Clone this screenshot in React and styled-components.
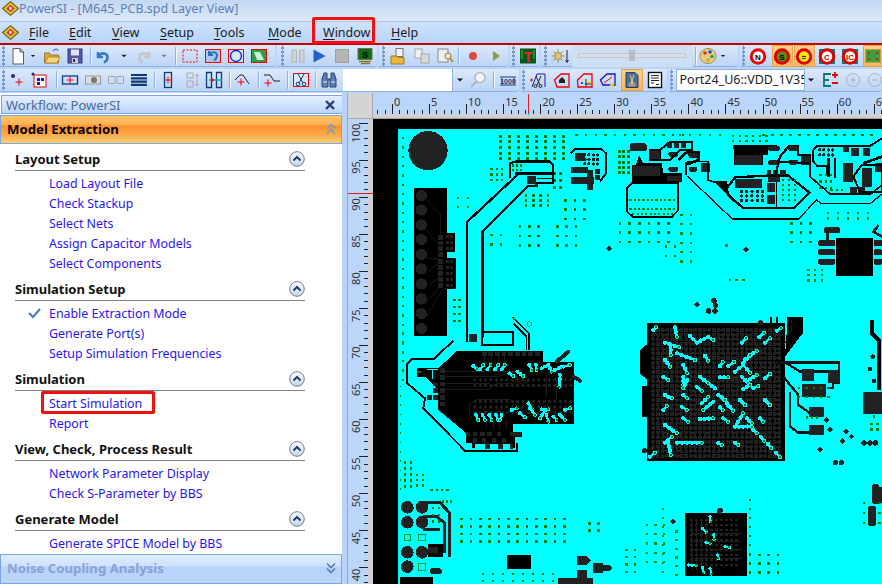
import React from 'react'
import styled, { createGlobalStyle } from 'styled-components'

const GlobalStyle = createGlobalStyle`
  html, body { margin: 0; padding: 0; background: #bcd5f7; }
  body { font-family: "Noto Sans", "Liberation Sans", sans-serif; overflow: hidden; }
`

const UI_FONT = `"Noto Sans", "Liberation Sans", sans-serif`
const CYAN = '#00ffff'
const DARK = '#222222'
const GREEN = '#008000'

const Shell = styled.div`
  width: 882px;
  height: 584px;
  overflow: hidden;
  display: flex;
  flex-direction: column;
`

const TitleBar = styled.div`
  height: 21px;
  flex: none;
  display: flex;
  align-items: center;
  gap: 0;
  padding: 0 0 4px 2px;
  box-sizing: border-box;
  margin-bottom: 1px;
  background: linear-gradient(#c3d8f2, #dce9f9);
  box-shadow: 0 1px 0 #a9c7ee;
  color: #5d7fb3;
  font-size: 12.5px;
`

const MenuBar = styled.div`
  height: 21px;
  flex: none;
  display: flex;
  align-items: center;
  background: linear-gradient(#cfe2fb, #b6d4fb);
  border-bottom: 2px solid #c60000;
`

const MenuLogo = styled.div`
  width: 29px;
  flex: none;
  display: flex;
  padding-left: 2px;
  box-sizing: border-box;
`

const MenuItem = styled.div`
  position: relative;
  width: ${p => p.$w}px;
  flex: none;
  color: #1a1a1a;
  font-size: 12.5px;
  u { text-underline-offset: 2px; text-decoration-thickness: 1px; }
  ${p => p.$marked && `
    &::after {
      content: '';
      position: absolute;
      left: -11px;
      right: 16px;
      top: -7px;
      bottom: -3px;
      border: 3px solid #f01010;
      border-radius: 2px;
    }
  `}
`

const ToolRow = styled.div`
  height: ${p => p.$h}px;
  flex: none;
  display: flex;
  gap: 2px;
  margin-bottom: ${p => p.$mb}px;
  background: #bcd5f7;
`

const ToolGroup = styled.div`
  width: ${p => p.$w}px;
  flex: none;
  display: flex;
  align-items: center;
  background: linear-gradient(#dbe9fc, #c8dcf8 60%, #bcd5f6);
  border-bottom: 1px solid #8fb2e4;
  border-radius: 0 0 3px 0;
`

const Tool = styled.div`
  width: ${p => p.$w}px;
  height: 22px;
  flex: none;
  margin-left: ${p => p.$ml}px;
  display: flex;
  align-items: center;
  justify-content: center;
  box-sizing: border-box;
  ${p => p.$on && `
    background: linear-gradient(#ffd08a, #fdb45a);
    border: 1px solid #e9a24e;
  `}
`

const Grip = styled(Tool)`
  background-image: radial-gradient(#6f97d6 1.1px, transparent 1.2px);
  background-size: 3px 4px;
  background-position: center;
  background-repeat: repeat-y;
`

const Sep = styled(Tool)`
  position: relative;
  &::after {
    content: '';
    width: 1px;
    height: 18px;
    background: #8fb2e4;
    box-shadow: 1px 0 0 #f2f7ff;
  }
`

const SliderTrack = styled(Tool)`
  background: #cfdff3;
  padding: 0 6px;
  &::before {
    content: '';
    flex: 1;
    height: 3px;
    background: #dadfe6;
    border: 1px solid #bfc7d2;
  }
  &::after {
    content: '';
    position: absolute;
    width: 6px;
    height: 11px;
    background: #b9bec6;
  }
`

const SearchBox = styled.div`
  width: ${p => p.$w}px;
  height: 22px;
  flex: none;
  margin-left: ${p => p.$ml}px;
  background: #fff;
  border-right: 1px solid #8fb2e4;
  box-sizing: border-box;
`

const ComboBox = styled.div`
  width: ${p => p.$w}px;
  height: 22px;
  flex: none;
  margin-left: ${p => p.$ml}px;
  box-sizing: border-box;
  padding-left: 3px;
  background: #fff;
  border: 1px solid #8fb2e4;
  color: #222;
  font-size: 12.5px;
  line-height: 20px;
  white-space: nowrap;
  overflow: hidden;
`

const Body = styled.div`
  flex: 1;
  display: flex;
  min-height: 0;
`

const Sidebar = styled.div`
  width: 342px;
  flex: none;
  display: flex;
  flex-direction: column;
  background: #fff;
`

const PanelTitle = styled.div`
  height: 19px;
  flex: none;
  box-sizing: border-box;
  margin: 2px 0 1px 1px;
  padding: 0 6px 0 4px;
  display: flex;
  align-items: center;
  justify-content: space-between;
  background: linear-gradient(#e4efff, #bcd5fb);
  border: 1px solid #7ba6e0;
  border-width: 1px 0 1px 1px;
  color: #4a6a9c;
  font-size: 13px;
`

const Accordion = styled.div`
  flex: none;
  display: flex;
  align-items: center;
  justify-content: space-between;
  box-sizing: border-box;
  padding: 0 3px 2px 6px;
  font-size: 13.2px;
  font-weight: 700;
  border: 1px solid #7ba6e0;
  height: ${p => p.$h}px;
`

const ActiveAccordion = styled(Accordion)`
  background: linear-gradient(#ffc56e, #ffb252 30%, #fb8f2c 38%, #ffad4d 72%, #ffcf78);
  color: #000;
`

const IdleAccordion = styled(Accordion)`
  background: linear-gradient(#dcebff, #cfe2fc 40%, #b6d3fb 42%, #bad6fc);
  color: #8e9fd6;
`

const SectionList = styled.div`
  flex: 1;
  padding: 4px 37px 0 15px;
  overflow: hidden;
`

const Section = styled.div`
  margin-bottom: 5px;
`

const SectionHead = styled.div`
  height: 22px;
  display: flex;
  align-items: center;
  justify-content: space-between;
  border-bottom: 1px solid #808080;
  margin-bottom: 2px;
  color: #111;
  font-size: 13px;
  font-weight: 700;
`

const Task = styled.div`
  position: relative;
  height: 20px;
  line-height: 21px;
  padding-left: 34px;
  color: #2a16f5;
  font-size: 12.4px;
  ${p => p.$marked && `
    &::after {
      content: '';
      position: absolute;
      left: 26px;
      width: 108px;
      top: -2px;
      height: 17px;
      border: 3px solid #f01010;
      border-radius: 2px;
    }
  `}
`

const TaskCheck = styled.span`
  position: absolute;
  left: 13px;
  top: 4px;
  display: flex;
`

const Splitter = styled.div`
  width: 5px;
  flex: none;
  background: #b9d3f7;
  border-right: 1px solid #87aae0;
  box-sizing: content-box;
`

const Workspace = styled.div`
  flex: 1;
  min-width: 0;
  display: grid;
  grid-template-columns: 25px 1fr;
  grid-template-rows: 26px 1fr;
`

const RulerCorner = styled.div`
  background: #d4d4d4;
  border-right: 1px solid #a8a8a8;
  border-bottom: 1px solid #a8a8a8;
`

const RulerBox = styled.div`
  overflow: hidden;
  background: #bcd6fb;
  display: flex;
`

const Board = styled.div`
  overflow: hidden;
  background: #000;
  display: flex;
`

// toolbar icon drawings, all in a 18x18 box
const Framed = ({ children, bg = 'none' }) => (
  <>
    <rect x="1.5" y="2.5" width="15" height="13" fill={bg} stroke="#f00000" />
    {children}
  </>
)
const Lbl = ({ x = 9, y = 13, c = '#000', s = 10, children }) => (
  <text x={x} y={y} fill={c} fontSize={s} fontWeight="700" textAnchor="middle" fontFamily="Liberation Sans">{children}</text>
)
const Ring = ({ outer, inner, c = '#000', bg, children }) => (
  <>
    <rect x="1" y="2" width="16" height="15" fill={bg || 'none'} />
    <circle cx="9" cy="9.5" r="8.2" fill={outer} />
    <circle cx="9" cy="9.5" r="5.2" fill={inner} />
    <Lbl y={12.5} c={c} s={8}>{children}</Lbl>
  </>
)
const Plus = ({ x, y, c = '#f00000' }) => <path d={`M${x - 3.5} ${y}h7M${x} ${y - 3.5}v7`} stroke={c} fill="none" />

const glyphs = {
  dd: <path d="M5 7h8l-4 4z" fill="#1c1c1c" />,
  ddg: <path d="M5 7h8l-4 4z" fill="#777" />,
  new: <path d="M4 1.5h7l3.5 3.5v12H4z M11 1.5v3.5h3.5" fill="#fdfdfd" stroke="#5c5c5c" />,
  open: (
    <>
      <path d="M1.5 6h5l1 2h8v8h-14z" fill="#d8a83c" stroke="#9c7a2c" />
      <path d="M2 16l3-6h12l-3 6z" fill="#f6d67e" stroke="#b08a30" />
      <path d="M10 4c2-2.5 4-2 5.500-.5" fill="none" stroke="#5d86b8" strokeWidth="1.4" />
    </>
  ),
  save: (
    <>
      <rect x="2" y="2" width="14" height="14" fill="#5558a8" stroke="#35376e" />
      <rect x="5" y="2.500" width="8" height="6" fill="#dfe3f5" />
      <rect x="6" y="11" width="6" height="5" fill="#c9cbd8" />
      <rect x="7" y="12" width="2" height="3" fill="#333" />
    </>
  ),
  undo: <path d="M4 5v5h5M4.500 9.500c2.500-4.500 9-4 9 1 0 2.500-1.500 4-3.500 5" fill="none" stroke="#3b78c4" strokeWidth="2.6" />,
  redo: <path d="M14 5v5H9M13.500 9.500c-2.500-4.500-9-4-9 1 0 2.500 1.500 4 3.500 5" fill="none" stroke="#c2c6cc" strokeWidth="2.6" />,
  dash: <rect x="2" y="3" width="14" height="12" fill="none" stroke="#f00000" strokeDasharray="2 1.500" />,
  undoBox: (
    <Framed bg="#a9c9f0">
      <path d="M5 4v4h4M5 7.500c2-3 8-3 8 1 0 2-1 3.500-3 5" fill="none" stroke="#2a6cc0" strokeWidth="2" />
    </Framed>
  ),
  circ: (
    <Framed bg="#d6e6fb">
      <circle cx="9" cy="9" r="5.500" fill="none" stroke="#1414d0" strokeWidth="1.300" />
    </Framed>
  ),
  greenBox: (
    <Framed bg="#2f9f46">
      <path d="M4 5h6l4 8H7z" fill="#cfeed6" />
    </Framed>
  ),
  pause: (
    <>
      <rect x="3" y="3" width="4.500" height="12" fill="#d0d3d6" stroke="#b0b3b6" />
      <rect x="10.500" y="3" width="4.500" height="12" fill="#d0d3d6" stroke="#b0b3b6" />
    </>
  ),
  play: <path d="M3.500 2.500L15.500 9 3.500 15.500z" fill="#1f62c8" />,
  stop: <rect x="2.500" y="2.500" width="13" height="13" fill="#b4b4b4" stroke="#a0a0a0" />,
  monitor: (
    <>
      <rect x="2" y="1.500" width="14" height="11" fill="#0d6b12" stroke="#6f6f5a" />
      <Lbl y={11} c="#000" s={9}>S</Lbl>
      <path d="M3 14.500h12M5 16.500h9" stroke="#8a7a22" strokeWidth="1.500" />
    </>
  ),
  openDoc: (
    <>
      <rect x="7" y="1.500" width="7" height="8" fill="#f4f4f4" stroke="#777" />
      <path d="M2 9h6l1 1.500h6V17H2z" fill="#e8b840" stroke="#a07c22" />
    </>
  ),
  copyDoc: (
    <>
      <rect x="2" y="2" width="7" height="9" fill="#f1f1f1" stroke="#a5a5a5" />
      <rect x="8" y="7" width="8" height="9" fill="#d8d8d8" stroke="#a5a5a5" />
    </>
  ),
  zoomDoc: (
    <>
      <rect x="2" y="2" width="10" height="13" fill="#eee" stroke="#8a8a8a" />
      <circle cx="12" cy="9" r="3" fill="#f1e7c8" stroke="#8a7a50" />
      <path d="M14 11l3 4" stroke="#b88a30" strokeWidth="2" />
    </>
  ),
  record: <circle cx="9" cy="9" r="4" fill="#d84a3a" />,
  playGreen: <path d="M6 4l7 5-7 5z" fill="#8f9c3c" />,
  tBoard: (
    <>
      <rect x="1" y="1.500" width="16" height="15" fill="#045a1a" />
      <path d="M3 3v9M15 3v9" stroke="#30d040" />
      <Lbl y={14.500} c="#ff2020" s={14}>T</Lbl>
    </>
  ),
  sun: (
    <>
      <circle cx="7" cy="9" r="3.500" fill="#e6c66c" stroke="#a08a50" />
      <path d="M7 2.500v2M7 13.500v2M.5 9h2M11.500 9h2M2.500 4.500L4 6M11.500 4.500L10 6M2.500 13.500L4 12M11.500 13.500L10 12" stroke="#8a7a50" />
      <path d="M16 3v12M14.500 13l1.500 2.500 1.500-2.500" stroke="#222" fill="none" />
    </>
  ),
  palette: (
    <>
      <ellipse cx="9" cy="9" rx="8" ry="7.500" fill="#e4cf82" stroke="#a08f50" />
      <circle cx="6" cy="6" r="1.800" fill="#d03030" />
      <circle cx="11" cy="5" r="1.800" fill="#2a50c8" />
      <circle cx="13" cy="9.500" r="1.800" fill="#2aa040" />
      <circle cx="9" cy="13" r="1.800" fill="#e0a020" />
    </>
  ),
  ringN: <Ring outer="#ee0000" inner="#fff">N</Ring>,
  ringS: <Ring outer="#e00000" inner="#5f8a10">S</Ring>,
  ring2: <Ring outer="#e00000" inner="#ffe800">≈</Ring>,
  ringC: <Ring outer="#e00000" inner="#fff" bg="#0f7a80" c="#d00000">C</Ring>,
  ringT: <Ring outer="#e00000" inner="#fff" bg="#0f7a80" c="#d00000">IC</Ring>,
  dotsBox: (
    <>
      <rect x="1.500" y="2.500" width="15" height="13" fill="#3aa040" stroke="#c9a040" />
      <path d="M4 6h2M5 5v2M12 6h2M13 5v2M4 12h2M5 11v2M12 12h2M13 11v2" stroke="#f00000" />
    </>
  ),
  dotPlus: (
    <>
      <circle cx="5" cy="5" r="2" fill="#1a2a80" />
      <Plus x={11} y={11} />
    </>
  ),
  blueBox: (
    <>
      <rect x="4" y="4" width="12" height="12" fill="#fff" stroke="#f00000" />
      <path d="M7 7h3v3H7zM11 7h3v3h-3zM7 11h3v3H7z" fill="#1010e0" />
      <circle cx="3" cy="3" r="1.500" fill="#1a2a80" />
    </>
  ),
  slot: (
    <>
      <rect x="1.500" y="5" width="15" height="8" fill="none" stroke="#123a78" strokeWidth="1.300" />
      <Plus x={9} y={9} />
    </>
  ),
  eyeSlot: (
    <>
      <rect x="1.500" y="5" width="15" height="8" fill="#ddd" stroke="#999" />
      <circle cx="10" cy="9" r="3" fill="#777" />
    </>
  ),
  splitSlot: <path d="M1.500 5.500h6.500v7H1.500zM10 5.500h6.500v7H10z" fill="none" stroke="#a5a5a5" />,
  bars: <path d="M1 4h16M1 7.300h16M1 10.600h16M1 13.900h16" stroke="#123a78" strokeWidth="2.200" />,
  vSlot: (
    <>
      <rect x="5.500" y="1.500" width="7" height="15" fill="none" stroke="#123a78" strokeWidth="1.300" />
      <Plus x={9} y={9} />
    </>
  ),
  vGrey: <path d="M4 2h6v5H4zM4 10h6v6H4zM14 3v12M12.500 5L14 3l1.500 2M12.500 13l1.500 2 1.500-2" fill="none" stroke="#aaa" />,
  vTwin: (
    <>
      <path d="M1.500 1.500h5v15h-5zM11.500 1.500h5v15h-5z" fill="none" stroke="#123a78" strokeWidth="1.300" />
      <path d="M4 9h13" stroke="#00a8c0" strokeWidth="1.500" />
      <path d="M6 9h3M7.500 7.500v3" stroke="#f00000" />
    </>
  ),
  arcPlus: (
    <>
      <path d="M1 9l5-5 3 0 6 9" fill="none" stroke="#222" />
      <Plus x={7} y={11} />
    </>
  ),
  wavePlus: (
    <>
      <path d="M1 4h6l4 6h6" fill="none" stroke="#222" />
      <Plus x={5} y={12} />
    </>
  ),
  scissorBox: (
    <Framed bg="#dbe9fc">
      <path d="M6 3l5 9M12 3L7 12" stroke="#123a78" fill="none" />
      <circle cx="6" cy="13" r="1.800" fill="none" stroke="#123a78" />
      <circle cx="12" cy="13" r="1.800" fill="none" stroke="#123a78" />
    </Framed>
  ),
  binoculars: (
    <>
      <path d="M2 8l2-6h3v6h4V2h3l2 6v8h-6V9H8v7H2z" fill="#5e80b5" stroke="#2c426c" />
      <path d="M3 11h4M11 11h4" stroke="#e8eef8" />
    </>
  ),
  search: (
    <>
      <circle cx="11" cy="6.500" r="5" fill="#f0f4fa" stroke="#b0b5bd" strokeWidth="1.400" />
      <path d="M7.500 10.500L2 16" stroke="#b0b5bd" strokeWidth="2.200" />
    </>
  ),
  gauge: (
    <>
      <path d="M1 6h16M1 14h16M3 7v6M15 7v6" stroke="#123a78" />
      <Lbl y={13} c="#123a78" s={7}>1000</Lbl>
    </>
  ),
  scissorPts: (
    <>
      <path d="M3 16L8 3h8v13" fill="none" stroke="#1414d0" />
      <path d="M7 5l4 9M12 5l-4 9" stroke="#222" />
      <circle cx="6.500" cy="15" r="1.500" fill="none" stroke="#222" />
      <circle cx="11.500" cy="15" r="1.500" fill="none" stroke="#222" />
      <path d="M1 9h3M2.500 7.500v3" stroke="#f00000" />
    </>
  ),
  polyA: (
    <>
      <path d="M1.500 9L8 3h8v13H4z" fill="none" stroke="#f00000" strokeWidth="1.300" />
      <path d="M6 9l3-3 3 3v3H6z" fill="#222" />
    </>
  ),
  polyB: (
    <>
      <path d="M1.500 9L8 3h8v13H2z" fill="none" stroke="#f00000" strokeWidth="1.300" />
      <circle cx="6" cy="12" r="1" fill="#1010c0" />
      <path d="M10 8v7M9 13h6" stroke="#222" />
      <path d="M12 11h3" stroke="#f0e000" strokeWidth="2" />
    </>
  ),
  polyC: (
    <>
      <path d="M1.500 9L8 3h8v11H4z" fill="none" stroke="#1414d0" strokeWidth="1.300" />
      <path d="M5 12l8-6" stroke="#f00000" />
      <path d="M11 15l4-2" stroke="#f0e000" strokeWidth="2" />
    </>
  ),
  scissorActive: (
    <>
      <path d="M3 1.500h9l3 3v12H3z" fill="#4a6f9c" stroke="#27415f" />
      <path d="M7 4l3 8M11 4l-3 8" stroke="#f3d070" />
      <circle cx="7.500" cy="13.500" r="1.500" fill="none" stroke="#f3d070" />
      <circle cx="10.500" cy="13.500" r="1.500" fill="none" stroke="#f3d070" />
    </>
  ),
  sheet: (
    <>
      <rect x="2.500" y="1.500" width="13" height="15" fill="#fff" stroke="#111" strokeWidth="1.400" />
      <path d="M5 4.500h8M5 7h8M5 9.500h8M5 12h3M10 13.500h3" stroke="#222" />
    </>
  ),
  layerPm: (
    <>
      <path d="M3 2v14M3 3h7M3 9h5M3 15h7" stroke="#0f7a70" strokeWidth="1.800" fill="none" />
      <path d="M11 4h6M14 1v6M11 12h6" stroke="#f00000" strokeWidth="1.800" />
    </>
  ),
  zoomIn: (
    <>
      <circle cx="9" cy="9" r="6.500" fill="none" stroke="#aab2bc" />
      <path d="M6 9h6M9 6v6" stroke="#aab2bc" />
    </>
  ),
  zoomOut: (
    <>
      <circle cx="9" cy="9" r="6.500" fill="none" stroke="#aab2bc" />
      <path d="M6 9h6" stroke="#aab2bc" />
    </>
  ),
}

const Icon = ({ name, size = 18 }) => (
  <svg width={size} height={size} viewBox="0 0 18 18" shapeRendering="geometricPrecision">{glyphs[name]}</svg>
)

// each tool: [kind, centre x, width], margins come out of the centres
const layoutTools = (start, items) => {
  let right = start
  return items.map(([name, centre, w = 20, on]) => {
    const ml = centre - w / 2 - right
    right = centre + w / 2
    return { name, w, ml, on }
  })
}

const topRow = [
  [275, 0, [['grip', 3, 6], ['new', 18], ['dd', 33, 10], ['open', 52], ['save', 75], ['sep', 90, 4], ['undo', 103], ['dd', 124, 12], ['redo', 144], ['ddg', 164, 12], ['sep', 175, 4], ['dash', 190], ['undoBox', 213], ['circ', 236], ['greenBox', 259]]],
  [100, 277, [['grip', 282, 6], ['pause', 298], ['play', 319], ['stop', 342], ['monitor', 365]]],
  [129, 379, [['grip', 383, 6], ['openDoc', 398], ['copyDoc', 422], ['zoomDoc', 445], ['sep', 458, 4], ['record', 473], ['playGreen', 496]]],
  [29, 510, [['grip', 513, 4], ['tBoard', 528]]],
  [197, 541, [['grip', 545, 6], ['sun', 560], ['slider', 632, 120], ['sep', 695, 4], ['palette', 708], ['dd', 723, 10]]],
  [140, 740, [['grip', 743, 4], ['ringN', 758], ['ringS', 782, 21, true], ['ring2', 804, 21, true], ['ringC', 827], ['ringT', 850], ['dotsBox', 873, 20, true]]],
]

const bottomRow = [
  [519, 0, [['grip', 3, 6], ['dotPlus', 17], ['blueBox', 39], ['sep', 56, 4], ['slot', 70], ['eyeSlot', 93], ['splitSlot', 116], ['bars', 139], ['sep', 154, 4], ['vSlot', 168], ['vGrey', 192], ['vTwin', 214], ['sep', 229, 4], ['arcPlus', 243], ['sep', 258, 4], ['wavePlus', 272], ['sep', 287, 4], ['scissorBox', 301], ['sep', 315, 4], ['binoculars', 329], ['input', 398, 110], ['dd', 460, 14], ['search', 478], ['sep', 493, 4], ['gauge', 508]]],
  [146, 521, [['grip', 523, 4], ['scissorPts', 538], ['polyA', 562], ['polyB', 585], ['polyC', 608], ['scissorActive', 632, 22, true], ['sheet', 655]]],
  [213, 669, [['grip', 671, 4], ['combo', 740, 129], ['dd', 811, 14], ['layerPm', 830], ['zoomIn', 853], ['zoomOut', 875]]],
]

const renderTool = ({ name, w, ml, on }, i) => {
  if (name === 'grip') return <Grip key={i} $w={w} $ml={ml} />
  if (name === 'sep') return <Sep key={i} $w={w} $ml={ml} />
  if (name === 'slider') return <SliderTrack key={i} $w={w} $ml={ml} />
  if (name === 'input') return <SearchBox key={i} $w={w} $ml={ml} />
  if (name === 'combo') return <ComboBox key={i} $w={w} $ml={ml}>Port24_U6::VDD_1V35</ComboBox>
  return <Tool key={i} $w={w} $ml={ml} $on={on}><Icon name={name} /></Tool>
}

const Toolbar = ({ groups, h, mb }) => (
  <ToolRow $h={h} $mb={mb}>
    {groups.map(([w, start, items], i) => (
      <ToolGroup key={i} $w={w}>{layoutTools(start, items).map(renderTool)}</ToolGroup>
    ))}
  </ToolRow>
)

const Diamond = ({ size = 16 }) => (
  <svg width={size} height={size} viewBox="0 0 16 16">
    <path d="M8 1.500l7.500 6.500-7.500 6.500L.5 8z" fill="#e6c23c" stroke="#6c5a10" />
    <path d="M8 4.500l4 3.500-4 3.500L4 8z" fill="#c83c20" />
    <circle cx="8" cy="8" r="1.300" fill="#fff" />
  </svg>
)

const Collapse = () => (
  <svg width="16" height="16" viewBox="0 0 16 16">
    <defs>
      <linearGradient id="knob" x1="0" y1="0" x2="0" y2="1">
        <stop offset="0" stopColor="#ffffff" />
        <stop offset="1" stopColor="#c4d4e8" />
      </linearGradient>
    </defs>
    <circle cx="8" cy="8" r="7.300" fill="url(#knob)" stroke="#6f7f92" />
    <path d="M4.500 9.500L8 6l3.500 3.500" fill="none" stroke="#1f3f6e" strokeWidth="2" />
  </svg>
)

const Chevrons = ({ up, color }) => (
  <svg width="14" height="14" viewBox="0 0 14 14">
    <g fill="none" stroke={color} strokeWidth="1.600" transform={up ? undefined : 'rotate(180 7 7)'}>
      <path d="M3 6.500l4-4 4 4M3 11.500l4-4 4 4" />
    </g>
  </svg>
)

const sections = [
  { title: 'Layout Setup', items: ['Load Layout File', 'Check Stackup', 'Select Nets', 'Assign Capacitor Models', 'Select Components'] },
  { title: 'Simulation Setup', items: ['Enable Extraction Mode', 'Generate Port(s)', 'Setup Simulation Frequencies'], checked: 'Enable Extraction Mode' },
  { title: 'Simulation', items: ['Start Simulation', 'Report'], marked: 'Start Simulation' },
  { title: 'View, Check, Process Result', items: ['Network Parameter Display', 'Check S-Parameter by BBS'] },
  { title: 'Generate Model', items: ['Generate SPICE Model by BBS'] },
]

const menus = [
  ['F', 'ile', 40], ['E', 'dit', 43], ['V', 'iew', 48], ['S', 'etup', 54],
  ['T', 'ools', 54], ['M', 'ode', 55], ['W', 'indow', 68, true], ['H', 'elp', 30],
]

// rulers
const TopRuler = () => {
  const ticks = []
  for (let n = -2; n < 68; n++) {
    const x = 19 + n * 7.41
    const major = n % 5 === 0
    ticks.push(<path key={n} d={`M${Math.round(x) + 0.5} ${major ? 11 : 17}V21`} stroke="#222" fill="none" />)
    if (major && n >= 0) ticks.push(<text key={`t${n}`} x={x + 2} y={12.5} fontSize="11" fill="#333" fontFamily={UI_FONT}>{n}</text>)
  }
  return (
    <svg width="509" height="26" viewBox="0 0 509 26">
      {ticks}
      <rect x="0" y="21" width="509" height="5" fill="#d0d0d0" />
      <path d="M0 25.500H509" stroke="#a0a0a0" />
      <path d="M155.500 1V21" stroke="#e02020" />
      <rect x="154.500" y="21" width="2" height="2" fill={CYAN} />
    </svg>
  )
}

const LeftRuler = () => {
  const ticks = []
  for (let n = 102; n > 37; n--) {
    const y = 3.7 + (100 - n) * 7.41
    const major = n % 5 === 0
    ticks.push(<path key={n} d={`M${major ? 11 : 16} ${Math.round(y) + 0.5}H20`} stroke="#222" fill="none" />)
    if (major) ticks.push(<text key={`t${n}`} transform={`translate(12 ${y + (n === 100 ? 20 : 14)}) rotate(-90)`} fontSize="11" fill="#333" fontFamily={UI_FONT}>{n}</text>)
  }
  return (
    <svg width="25" height="465" viewBox="0 0 25 465">
      {ticks}
      <rect x="20" y="0" width="5" height="465" fill="#d0d0d0" />
      <path d="M0 74.500H25" stroke="#e02020" />
    </svg>
  )
}

// board artwork helpers
const Dots = ({ x, y, nx = 1, ny = 1, dx = 28, dy = 28, s = 7, c = GREEN }) => {
  const out = []
  for (let i = 0; i < nx; i++) for (let j = 0; j < ny; j++) {
    const cx = x + i * dx
    const cy = y + j * dy
    out.push(<rect key={`${i}-${j}`} x={cx - s / 2 - 1} y={cy - s / 2 - 1} width={s + 2} height={s + 2} fill={c} />)
    if (s >= 6) out.push(<rect key={`c${i}-${j}`} x={cx - 1.5} y={cy - 1.5} width="3" height="3" fill="#003000" />)
  }
  return <>{out}</>
}

const Balls = ({ x, y, w, h, step = 14, r = 6 }) => {
  const out = []
  for (let i = 0; i * step < w; i++) for (let j = 0; j * step < h; j++) {
    out.push(<circle key={`${i}-${j}`} cx={x + i * step} cy={y + j * step} r={r} fill={DARK} />)
  }
  return <>{out}</>
}

// vias sit on the ball pitch, so a run reads as a string of beads
const Vias = ({ list, w = 9 }) => (
  <>
    {list.map((v, i) => {
      const len = Math.hypot(v[2] - v[0], v[3] - v[1])
      const n = Math.max(1, Math.round(len / 14))
      const beads = []
      for (let k = 0; k <= n; k++) {
        beads.push(<circle key={k} cx={v[0] + (v[2] - v[0]) * k / n} cy={v[1] + (v[3] - v[1]) * k / n} r={w / 2 + 1} fill={CYAN} />)
      }
      return (
        <g key={i}>
          <path d={`M${v[0]} ${v[1]}L${v[2]} ${v[3]}`} stroke={CYAN} strokeWidth={w * 0.7} />
          {beads}
          <rect x={v[2] - 3} y={v[3] - 3} width="6" height="6" fill={GREEN} />
        </g>
      )
    })}
  </>
)

const Pads = ({ list, fill = DARK }) => (
  <>{list.map((r, i) => <rect key={i} x={r[0]} y={r[1]} width={r[2]} height={r[3]} rx={r[4] || 0} fill={fill} />)}</>
)

const Knobs = ({ list, r = 9 }) => (
  <>{list.map((p, i) => <circle key={i} cx={p[0]} cy={p[1]} r={p[2] || r} fill={DARK} />)}</>
)

const mainVias = [
  [760, 30, 768, 22], [825, 22, 830, 50], [795, 68, 838, 82], [812, 75, 812, 105], [830, 100, 885, 120], [795, 120, 810, 140],
  [850, 135, 862, 160], [850, 170, 850, 195], [862, 180, 850, 205], [850, 225, 862, 235], [845, 260, 860, 270], [850, 295, 865, 305],
  [870, 48, 890, 68], [890, 68, 925, 50], [925, 50, 940, 60],
  [915, 108, 925, 122], [960, 138, 968, 126], [985, 138, 1002, 126], [1025, 68, 1038, 55], [1078, 52, 1092, 38], [1095, 68, 1110, 55],
  [1130, 32, 1142, 25], [1035, 118, 1070, 92], [1030, 130, 1050, 105], [1005, 155, 1030, 135], [1030, 135, 1050, 158],
  [900, 170, 925, 190], [945, 205, 925, 190], [1040, 185, 1070, 165], [1025, 170, 1045, 190], [1095, 175, 1110, 162], [790, 170, 805, 180],
  [890, 200, 905, 212], [1030, 208, 1050, 195], [1060, 205, 1075, 198], [795, 225, 815, 235], [965, 230, 990, 260], [940, 245, 910, 270],
  [1020, 240, 1035, 255], [1095, 240, 1110, 255], [960, 262, 968, 270], [985, 258, 1000, 272], [790, 270, 800, 258], [900, 297, 940, 295],
  [970, 295, 985, 305], [1005, 320, 1030, 280], [1040, 295, 1055, 310], [1080, 295, 1090, 305], [1005, 320, 1055, 320], [1060, 330, 1070, 340], [1082, 350, 1092, 362], [1104, 372, 1114, 384], [1128, 398, 1140, 412],
  [795, 315, 830, 340], [795, 368, 815, 350], [830, 368, 905, 368], [955, 368, 965, 375], [1005, 368, 1015, 375], [750, 410, 765, 398], [805, 368, 812, 405],
  [960, 172, 985, 172], [955, 225, 975, 240], [905, 250, 925, 230],
]

const leftVias = [
  [220, 138, 232, 148], [240, 148, 250, 135], [262, 148, 272, 135], [285, 148, 295, 135], [305, 148, 315, 135],
  [328, 160, 340, 168], [352, 155, 370, 168], [388, 135, 395, 150], [408, 135, 410, 150], [425, 145, 445, 135], [445, 135, 455, 155], [465, 150, 485, 140], [490, 140, 510, 135],
  [480, 165, 478, 200], [228, 285, 235, 300], [248, 285, 255, 300], [268, 285, 275, 300], [288, 285, 295, 300], [305, 285, 300, 300],
  [335, 270, 350, 265], [360, 280, 375, 292], [385, 250, 395, 265], [390, 265, 405, 285], [425, 268, 445, 268], [435, 272, 420, 295], [440, 285, 445, 305], [460, 290, 470, 300], [480, 285, 495, 300], [495, 270, 510, 265],
]

const UpperArt = () => (
  <g transform="translate(400 120) scale(0.33333)">
    {/* edge dots and via fields */}
    <Dots x={9} y={55} ny={24} dy={28} s={5} />
    <Dots x={301} y={49} nx={8} ny={5} dx={27} dy={17} />
    <Dots x={530} y={45} nx={12} dx={29} s={5} />
    <Dots x={840} y={45} nx={5} dx={30} s={5} />
    <Dots x={1000} y={48} nx={6} ny={2} dx={20} dy={16} s={5} />
    <Dots x={1090} y={45} nx={13} dx={27} s={6} />
    <Dots x={658} y={95} nx={3} ny={5} dx={14} dy={16} />
    <Dots x={275} y={148} nx={3} ny={3} dx={16} dy={16} s={5} />
    <Dots x={378} y={227} nx={4} ny={3} dx={22} dy={15} s={6} />
    <Dots x={497} y={241} nx={3} ny={3} dx={28} dy={28} s={6} />
    <Dots x={175} y={234} nx={2} ny={2} dx={29} dy={28} s={5} />
    <Dots x={360} y={320} nx={3} ny={3} dx={28} dy={28} s={6} />
    <Dots x={472} y={320} nx={3} ny={3} dx={28} dy={28} s={6} />
    <Dots x={660} y={310} nx={6} ny={3} dx={29} dy={28} s={6} />
    <Dots x={845} y={285} nx={2} ny={6} dx={28} dy={28} s={5} />
    <Dots x={798} y={380} nx={2} ny={2} dx={28} dy={28} s={5} />
    <Dots x={1175} y={310} nx={3} ny={3} dx={28} dy={28} s={6} />
    <Dots x={1285} y={280} nx={5} ny={2} dx={30} dy={16} s={5} />
    <Dots x={275} y={346} nx={2} ny={2} dx={28} dy={28} s={5} />
    <Dots x={163} y={540} nx={2} ny={4} dx={16} dy={21} s={6} />
    <Dots x={990} y={480} nx={3} dx={20} s={6} />
    <Dots x={1226} y={450} nx={3} ny={3} dx={20} dy={16} s={5} />
    <Dots x={980} y={377} s={6} />
    <Dots x={465} y={160} nx={2} ny={3} dx={18} dy={22} />

    {/* big mounting hole */}
    <circle cx="84" cy="92" r="59" fill={DARK} />

    {/* connector */}
    <rect x="42" y="205" width="99" height="443" fill="#000" />
    <rect x="113" y="340" width="52" height="55" fill="#000" />
    <rect x="113" y="415" width="55" height="92" fill="#000" />
    <Knobs r={17} list={[[64, 227], [64, 270], [64, 315], [64, 358], [64, 403], [64, 447], [64, 492], [64, 537], [64, 580], [64, 625]]} />
    <path d="M80 240l42 45v70M80 330l30 40M80 415h35M80 460l35-30M80 500l40-30M80 545l45-50M80 590l50-85" stroke={DARK} fill="none" strokeWidth="2" />
    <Pads list={[[115, 345, 15, 14], [115, 362, 15, 14], [115, 379, 15, 14], [115, 396, 15, 14], [115, 418, 15, 14], [115, 436, 15, 14], [115, 454, 15, 14], [115, 472, 15, 14], [115, 490, 15, 14]]} />
    <Knobs r={5} list={[[143, 350], [155, 350], [143, 368], [155, 368], [143, 385], [155, 385], [143, 424], [155, 424], [143, 442], [155, 442], [143, 460], [155, 460], [143, 478], [155, 478], [143, 496], [155, 496]]} />

    {/* long routed pair */}
    <path d="M202 665V305L357 160" fill="none" stroke="#000" strokeWidth="7" />
    <path d="M248 650V335L385 198" fill="none" stroke="#000" strokeWidth="7" />
    <path d="M330 175V130L345 125H450L460 135V190H410V198H385" fill="none" stroke="#000" strokeWidth="7" />
    <path d="M345 160H460" stroke="#000" strokeWidth="8" />
    <rect x="381" y="167" width="26" height="26" fill={DARK} />
    <path d="M412 175H458" stroke="#000" strokeWidth="4" />
    <Dots x={340} y={137} nx={3} ny={2} dx={12} dy={14} s={5} />

    {/* upper connector stub */}
    <path d="M512 100L525 88H605L618 100V160L600 185" fill="none" stroke="#000" strokeWidth="6" />
    <Pads list={[[525, 98, 30, 26], [513, 140, 50, 20], [513, 170, 70, 22], [585, 148, 16, 14], [585, 165, 16, 14], [562, 150, 16, 60]]} />
    <Knobs r={5} list={[[555, 105], [567, 105], [580, 105], [592, 105], [555, 118], [567, 118], [580, 118], [592, 118], [555, 132], [567, 132], [580, 132], [592, 132]]} />

    {/* octagon pocket */}
    <path d="M680 205L695 190H835V270L815 292H700L682 275Z" fill={CYAN} stroke="#000" strokeWidth="5" />
    <Dots x={692} y={241} nx={11} ny={2} dx={13} dy={27} s={5} />
    <Dots x={700} y={282} nx={10} dx={13} s={4} />

    {/* upper copper block */}
    <path d="M697 135H708L717 105L730 130H785L790 160H845V185H780L770 190H697Z" fill="#000" />
    <rect x="700" y="138" width="80" height="30" fill={DARK} />
    <Pads list={[[690, 70, 50, 24, 6], [805, 95, 30, 15, 6], [805, 140, 30, 15, 6], [800, 168, 44, 16]]} />
    <path d="M750 90H780V120H750ZM780 90L810 65H875V90H840L810 120H780" fill="none" stroke="#000" strokeWidth="6" />
    <Pads list={[[753, 92, 26, 26], [800, 70, 16, 14], [822, 70, 14, 14], [842, 70, 16, 14]]} />
    <path d="M835 120L860 97H895V120L870 130H858V165" fill="none" stroke="#000" strokeWidth="8" />
    <Pads list={[[865, 98, 28, 16, 7], [866, 140, 26, 16, 7], [904, 130, 26, 26]]} />
    <path d="M860 125H925V180L945 187H980" fill="none" stroke="#000" strokeWidth="5" />

    {/* routed outline to the right */}
    <path d="M862 168L997 297H1195L1250 240L1262 250H1412L1446 222" fill="none" stroke="#000" strokeWidth="4" />
    <path d="M945 187H980L1030 262L1000 245Z" fill="#000" />
    <path d="M980 205L1005 172L1100 167H1165L1228 218L1180 265H1030L985 225Z" fill={CYAN} stroke="#000" strokeWidth="7" />
    <Pads list={[[1005, 178, 80, 26], [1100, 190, 26, 26], [1100, 225, 26, 26]]} />
    <Knobs r={5} list={[[1024, 215], [1040, 215], [1056, 215], [1072, 215], [1088, 215], [1024, 228], [1040, 228], [1056, 228], [1072, 228], [1088, 228], [1024, 241], [1040, 241], [1056, 241], [1072, 241], [1088, 241]]} />
    <path d="M1130 180V265" stroke="#000" strokeWidth="5" />
    <Dots x={1150} y={180} nx={3} ny={5} dx={18} dy={15} s={5} />

    {/* block above it */}
    <path d="M1000 75H1130L1140 90H1105V105H1090V135H1003Z" fill="#000" />
    <Pads list={[[1005, 105, 80, 30], [1105, 78, 35, 16, 8], [1105, 120, 35, 16, 8], [1100, 150, 14, 14], [1120, 150, 14, 14], [1140, 150, 18, 14], [1105, 170, 35, 16]]} />
    <path d="M1125 170L1140 110L1165 80H1195V105H1230V140" fill="none" stroke="#000" strokeWidth="7" />
    <Pads list={[[1165, 78, 32, 16, 8], [1165, 120, 30, 14, 7], [1203, 108, 26, 26]]} />
    <path d="M1140 125L1230 130V170L1290 222H1412L1446 195" fill="none" stroke="#000" strokeWidth="5" />

    {/* far right cluster */}
    <path d="M1240 90L1250 78H1410L1446 55M1240 90V125L1252 138H1280V165" fill="none" stroke="#000" strokeWidth="6" />
    <Knobs r={5} list={[[1260, 90], [1272, 90], [1285, 90], [1298, 90], [1260, 105], [1272, 105], [1285, 105], [1298, 105]]} />
    <Pads list={[[1330, 80, 18, 16], [1352, 85, 24, 22], [1388, 85, 22, 22], [1330, 130, 30, 55], [1385, 145, 32, 55], [1350, 200, 20, 18], [1375, 200, 20, 18], [1425, 130, 21, 26]]} />
    <path d="M1285 115V170M1305 115V175M1390 130L1446 110" stroke="#000" strokeWidth="8" fill="none" />
    <path d="M1360 170L1385 135H1446V215H1380Z" fill="none" stroke="#000" strokeWidth="6" />
    <Dots x={1262} y={165} nx={3} ny={3} dx={16} dy={20} s={5} />
    <Dots x={1295} y={210} nx={3} dx={16} s={5} />

    {/* diamonds */}
    <path d="M627 378l9 9-9 9-9-9zM1038 381l9 9-9 9-9-9zM891 546l9 9-9 9-9-9z" fill={DARK} />
    <Knobs r={8} list={[[942, 542], [946, 556], [926, 573], [945, 573]]} />

    {/* chip at right edge */}
    <rect x="1308" y="353" width="112" height="114" fill="#000" />
    <Pads list={[[1255, 360, 50, 18, 5], [1255, 388, 50, 18, 5], [1255, 416, 50, 18, 5], [1422, 360, 24, 18, 5], [1422, 388, 24, 18, 5], [1422, 416, 24, 18, 5], [1272, 322, 48, 18, 6]]} />
    <path d="M1283 340V362M1436 315L1420 335L1446 350" stroke={DARK} strokeWidth="8" fill="none" />

    {/* strap near the small via */}
    <path d="M338 592L388 642V690M342 612L380 650V690" fill="none" stroke="#000" strokeWidth="5" />
    <circle cx="388" cy="612" r="7" fill="none" stroke={GREEN} strokeWidth="2" />
    <Dots x={342} y={598} s={5} />
    <rect x="208" y="642" width="24" height="24" fill={DARK} />
  </g>
)

const LowerArt = () => (
  <g transform="translate(400 320) scale(0.33333)">
    <Dots x={10} y={40} ny={6} dy={28} s={5} />
    <Dots x={1} y={200} ny={12} dy={28} s={3} />

    {/* left bga */}
    <path d="M160 62L100 118H35L22 130V190L75 235L70 265L195 392H350V370" fill="none" stroke="#000" strokeWidth="6" />
    <path d="M245 35H340V75H245Z" fill="none" stroke="#000" strokeWidth="6" />
    <path d="M170 93H430V125H522V312H340V335H365V352H345V385H215V368H197V338L115 270V210L75 170H50V145H115Z" fill="#000" />
    <Balls x={225} y={180} w={290} h={20} step={16} r={5} />
    <Balls x={225} y={245} w={290} h={40} step={16} r={5} />
    <Pads list={[[247, 95, 14, 14], [265, 95, 14, 14], [285, 95, 14, 14], [305, 95, 14, 14], [325, 95, 14, 14], [345, 95, 14, 14], [365, 95, 14, 14], [385, 95, 14, 14], [405, 95, 14, 14],
      [197, 335, 14, 14], [218, 335, 14, 14], [240, 335, 14, 14], [262, 335, 14, 14], [290, 335, 14, 14], [330, 335, 14, 14], [345, 335, 18, 14],
      [218, 355, 14, 14], [245, 355, 14, 14], [275, 355, 14, 14], [305, 355, 14, 14], [98, 185, 16, 14], [98, 205, 16, 14], [98, 225, 16, 14], [80, 225, 16, 14], [120, 145, 14, 14], [120, 165, 14, 14], [120, 185, 14, 14], [120, 205, 14, 14], [120, 225, 14, 14], [120, 245, 14, 14]]} />
    <path d="M135 155H350M135 170H300M135 190H270M135 210H260L290 190H340M210 285V250L230 240H330M260 325V300M280 325V300M300 325V300M320 325V300M255 105V135M275 105V135M295 105V135M315 105V135M440 230V170M470 240V180" stroke={DARK} strokeWidth="2.500" fill="none" />
    <path d="M82 148H113M97 148V178" stroke={CYAN} strokeWidth="3" />
    <Vias list={leftVias} w={10} />
    <rect x="55" y="152" width="8" height="8" fill={GREEN} />
    <Pads fill={CYAN} list={[[225, 372, 115, 14]]} />
    <Pads list={[[255, 372, 14, 14], [295, 372, 14, 14], [330, 372, 8, 14]]} />
    <path d="M470 125L505 95M520 170L540 182" stroke={DARK} strokeWidth="12" strokeLinecap="round" />

    {/* main bga */}
    <rect x="742" y="10" width="413" height="412" fill="#000" />
    <Balls x={760} y={30} w={385} h={385} step={14} r={6.500} />
    <Vias list={mainVias} w={11} />
    <path d="M720 90L742 72V180L720 160ZM726 198H745V292H726Z" fill="#000" />
    <path d="M1112 10V-10M1130 10V-10" stroke="#000" strokeWidth="6" />
    <path d="M1162 10V-10H1208V40L1155 110" fill="#000" />
    <path d="M1175 0V30L1150 80" stroke={DARK} strokeWidth="2.500" fill="none" />
    <Knobs r={8} list={[[1082, 8], [733, 392]]} />

    {/* bga escape on the right */}
    <path d="M1125 128H1318V188H1300V205L1285 205M1150 170L1195 225V255L1228 278M1170 215V320L1195 338H1228M1160 130L1200 155H1300" stroke="#111" strokeWidth="7" fill="none" />
    <Pads list={[[1205, 146, 38, 36], [1205, 192, 36, 38], [1243, 192, 36, 38], [1228, 262, 44, 30], [1228, 316, 44, 30], [1285, 150, 35, 38]]} />
    <Dots x={1198} y={205} nx={5} ny={2} dx={22} dy={26} s={5} />
    <Dots x={1222} y={293} nx={3} dx={15} s={5} />
    <path d="M1280 292l9 9-9 9-9-9zM1290 321l9 9-9 9-9-9zM1338 327l9 9-9 9-9-9zM1328 354l9 9-9 9-9-9zM1354 342l8 8-8 8-8-8zM1260 381l9 9-9 9-9-9zM819 597l9 9-9 9-9-9z" fill={DARK} />
    <Knobs r={8} list={[[1392, 369], [1410, 369], [1426, 369], [1306, 428], [1324, 428]]} />

    {/* right edge */}
    <Pads list={[[1390, 216, 56, 65], [1415, 492, 22, 60, 10], [1404, 558, 24, 60, 10], [1438, 500, 8, 50]]} />
    <path d="M1415 0V40L1436 60V210" stroke="#000" strokeWidth="12" fill="none" />
    <Knobs r={7} list={[[1418, 110], [1410, 148], [1422, 184]]} />
    <Dots x={1423} y={290} s={5} />
    <Dots x={1415} y={313} nx={2} ny={2} dx={18} dy={16} s={5} />
    <Dots x={1393} y={550} nx={2} ny={3} dx={46} dy={30} s={5} />

    {/* lower left via fade */}
    <Dots x={16} y={428} nx={2} ny={5} dx={18} dy={18} s={5} />
    <Dots x={52} y={465} nx={2} ny={3} dx={18} dy={16} s={5} />
    <Dots x={95} y={510} nx={4} dx={16} s={5} />
    <Dots x={130} y={545} nx={3} dx={12} dy={12} s={5} />

    {/* lower left pads */}
    <Knobs r={19} list={[[22, 562], [66, 562], [22, 607], [66, 607], [22, 697], [66, 697], [22, 740]]} />
    <path d="M70 548H120L150 580V710" fill="none" stroke={DARK} strokeWidth="9" />
    <path d="M70 590H110L135 610V700M70 628H120" fill="none" stroke={DARK} strokeWidth="9" />
    <Pads list={[[85, 672, 44, 38], [0, 770, 98, 22, 0]]} fill="#000" />
    <Pads list={[[85, 680, 30, 20, 5], [90, 745, 35, 18, 8]]} />
    <rect x="13" y="644" width="18" height="18" fill="none" stroke={GREEN} strokeWidth="2.500" />
    <rect x="56" y="644" width="20" height="18" fill="none" stroke={GREEN} strokeWidth="2.500" />
    <rect x="55" y="730" width="22" height="22" fill="none" stroke={GREEN} strokeWidth="2.500" />
    <Dots x={100} y={565} nx={2} ny={3} dx={18} dy={20} s={5} />

    {/* via field and lower components */}
    <Dots x={185} y={597} nx={12} ny={4} dx={28} dy={22.400} s={6} />
    <Dots x={568} y={610} nx={2} ny={2} dx={28} dy={22} s={6} />
    <Dots x={742} y={615} nx={3} ny={5} dx={25} dy={28} s={5} />
    <Dots x={680} y={690} nx={2} ny={4} dx={26} dy={22} s={5} />
    <Dots x={1050} y={540} nx={1} ny={7} dy={27} s={5} />
    <Dots x={1050} y={705} nx={4} ny={3} dx={28} dy={26} s={6} />
    <Dots x={250} y={762} nx={8} ny={2} dx={30} dy={22} s={5} />
    <Dots x={790} y={568} ny={8} dy={27} s={5} />
    <Dots x={830} y={635} ny={6} dy={26} s={5} />
    <rect x="321" y="705" width="72" height="42" fill="#000" />
    <path d="M532 708H560L573 720L560 735H532Z" fill={DARK} />
    <path d="M580 730H608V758H580ZM608 735H630L638 744L630 752H608Z" fill={DARK} />
    <path d="M530 750H560V775H578V792H474V775H530Z" fill={DARK} />

    {/* small bga */}
    <rect x="855" y="580" width="186" height="188" fill="#000" />
    <Balls x={875} y={600} w={150} h={150} step={15} r={4} />
    <path d="M875 600V750M890 600V750M905 600V750M920 600V750M875 640H1025M875 665H1025M875 690H1025M875 715H1025" stroke={DARK} strokeWidth="3" />
    <Vias w={8} list={[[930, 590, 932, 605], [908, 625, 920, 638], [942, 645, 942, 658], [918, 668, 930, 670], [975, 680, 988, 682], [952, 705, 955, 715], [865, 735, 888, 736], [908, 742, 910, 758], [930, 745, 935, 762]]} />
    <circle cx="960" cy="572" r="9" fill={DARK} />
  </g>
)

const BoardArt = () => (
  <svg width="509" height="465" viewBox="373 119 509 465" shapeRendering="crispEdges">
    <rect x="373" y="119" width="509" height="465" fill="#000" />
    <rect x="398" y="129" width="484" height="455" fill={CYAN} />
    <UpperArt />
    <LowerArt />
  </svg>
)

const App = () => (
  <Shell>
    <GlobalStyle />
    <TitleBar>
      <Diamond size={17} />
      PowerSI - [M645_PCB.spd Layer View]
    </TitleBar>
    <MenuBar>
      <MenuLogo><Diamond size={17} /></MenuLogo>
      {menus.map(([key, rest, w, marked]) => (
        <MenuItem key={key} $w={w} $marked={marked}><u>{key}</u>{rest}</MenuItem>
      ))}
    </MenuBar>
    <Toolbar groups={topRow} h={22} mb={2} />
    <Toolbar groups={bottomRow} h={23} mb={1} />
    <Body>
      <Sidebar>
        <PanelTitle>
          Workflow: PowerSI
          <svg width="12" height="12" viewBox="0 0 12 12">
            <path d="M2 2l8 8M10 2l-8 8" stroke="#1f3f80" strokeWidth="2.400" />
          </svg>
        </PanelTitle>
        <ActiveAccordion $h={29}>
          Model Extraction
          <Chevrons up color="#6f9fd0" />
        </ActiveAccordion>
        <SectionList>
          {sections.map(section => (
            <Section key={section.title}>
              <SectionHead>
                {section.title}
                <Collapse />
              </SectionHead>
              {section.items.map(item => (
                <Task key={item} $marked={section.marked === item}>
                  {section.checked === item && (
                    <TaskCheck>
                      <svg width="13" height="12" viewBox="0 0 13 12">
                        <path d="M1 6l4 4 7-8" fill="none" stroke="#4a76b8" strokeWidth="2" />
                      </svg>
                    </TaskCheck>
                  )}
                  {item}
                </Task>
              ))}
            </Section>
          ))}
        </SectionList>
        <IdleAccordion $h={30}>
          Noise Coupling Analysis
          <Chevrons color="#5a7bb0" />
        </IdleAccordion>
      </Sidebar>
      <Splitter />
      <Workspace>
        <RulerCorner />
        <RulerBox><TopRuler /></RulerBox>
        <RulerBox><LeftRuler /></RulerBox>
        <Board><BoardArt /></Board>
      </Workspace>
    </Body>
  </Shell>
)

export default App
